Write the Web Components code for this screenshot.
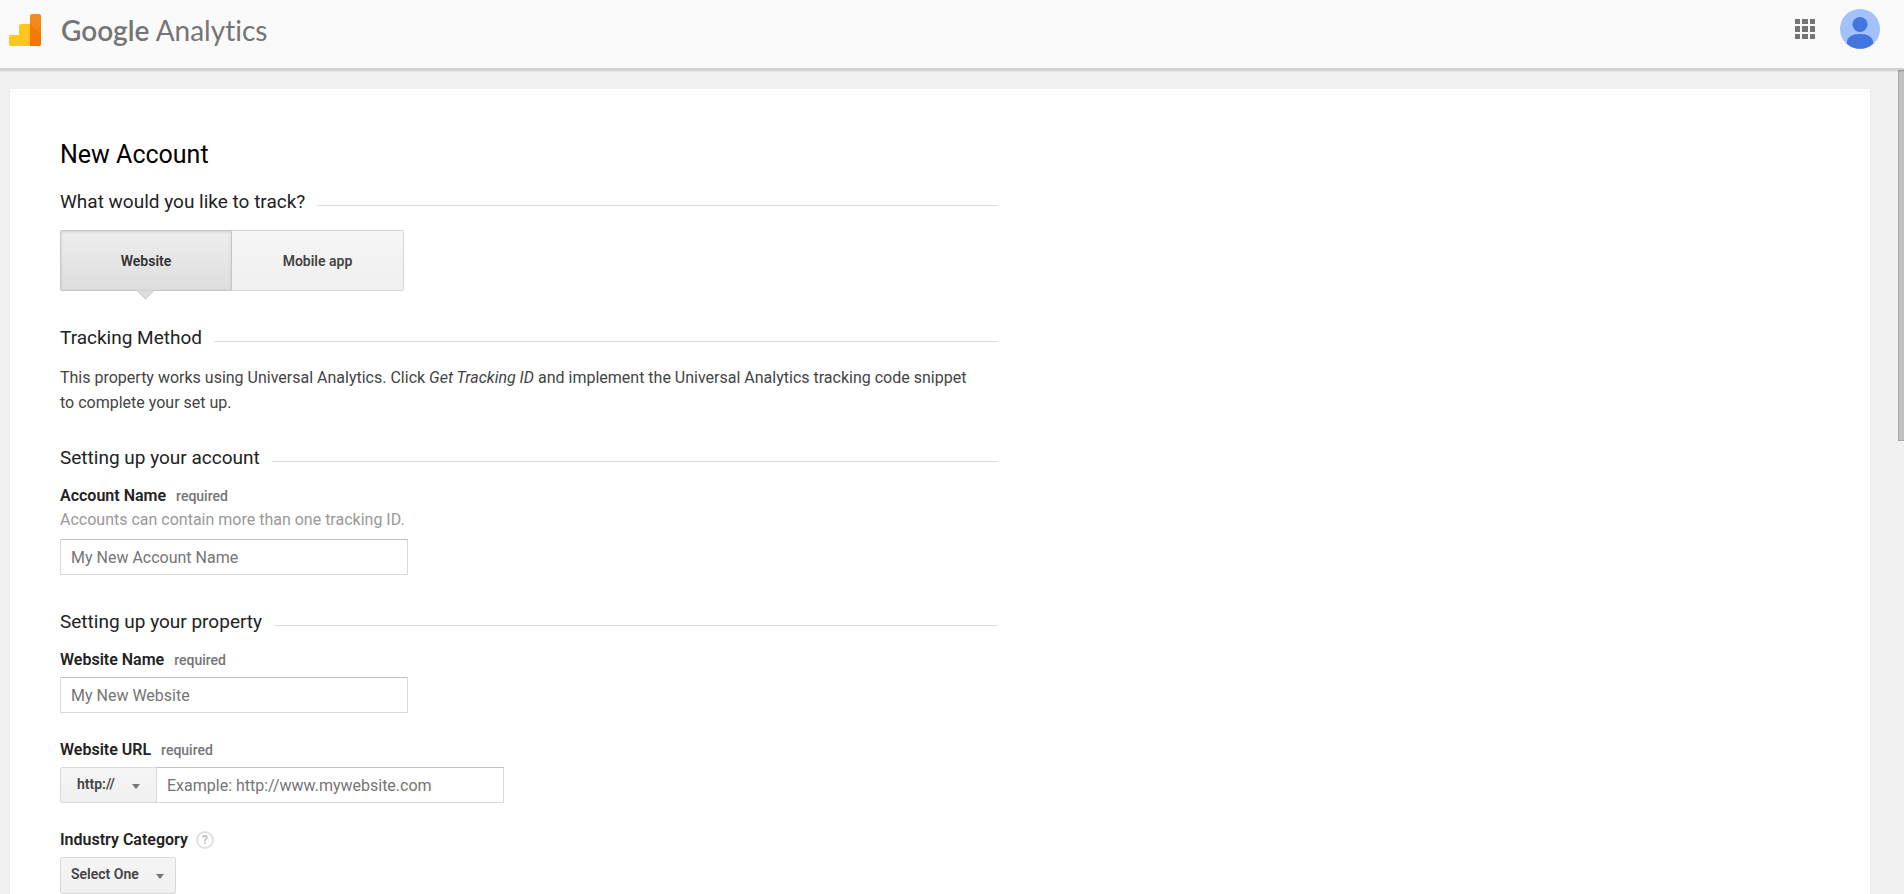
<!DOCTYPE html>
<html lang="en">
<head>
<meta charset="utf-8">
<meta name="viewport" content="width=device-width, initial-scale=1">
<title>Google Analytics</title>
<style>
    html, body {
        height: 100%;
        margin: 0;
    }
    body {
        font-family: Roboto, "Liberation Sans", sans-serif;
        font-size: 16px;
        color: #444;
        background: #f1f1f1;
    }
    h1 {
        margin: 0 0 21px;
        font-size: 25px;
        line-height: 28px;
        font-weight: 400;
        color: #000;
    }
    p {
        max-width: 924px;
        margin: -1px 0 0;
        line-height: 25px;
    }
</style>
</head>
<body>

<ga-shell>
    <ga-header slot="header"></ga-header>
    <ga-card>
        <h1>New Account</h1>
        <ga-section heading="What would you like to track?">
            <ga-toggle options="Website,Mobile app"></ga-toggle>
        </ga-section>
        <ga-section heading="Tracking Method">
            <p>This property works using Universal Analytics. Click <em>Get Tracking ID</em> and implement the Universal Analytics tracking code snippet to complete your set up.</p>
        </ga-section>
        <ga-section heading="Setting up your account">
            <ga-field label="Account Name" required hint="Accounts can contain more than one tracking ID." placeholder="My New Account Name"></ga-field>
        </ga-section>
        <ga-section heading="Setting up your property">
            <ga-field label="Website Name" required placeholder="My New Website"></ga-field>
            <ga-field label="Website URL" required placeholder="Example: http://www.mywebsite.com">
                <ga-select slot="prefix" class="joined" label="Protocol" options="http://,https://"></ga-select>
            </ga-field>
            <ga-select label="Industry Category" show-label options="Select One"></ga-select>
        </ga-section>
    </ga-card>
</ga-shell>

<script>
(function() {

    // Creates the open shadow root of a component
    function render(component, html) {
        component.attachShadow({ mode: 'open' }).innerHTML = html;
        return component.shadowRoot;
    }

    // Label styles shared by the form components
    const labelCSS = `
        .label {
            display: flex;
            align-items: baseline;
            gap: 10px;
            margin-bottom: 7px;
            line-height: 20px;
        }
        label {
            font-weight: 600;
            color: #222;
        }`;


    // ------------------------------------------------------ SHELL

    class GaShell extends HTMLElement {
        constructor() {
            super();
            render(this, `
            <style>
                :host {
                    display: flex;
                    flex-direction: column;
                    height: 100vh;
                    overflow: hidden;
                }
                .view {
                    display: flex;
                    flex: 1;
                    min-height: 0;
                }
                main {
                    flex: 1;
                    min-width: 0;
                    overflow: hidden;
                    padding: 19px 28px 0 10px;
                }
                .scrollbar { width: 6px; }
                .thumb {
                    box-sizing: border-box;
                    height: 45%;
                    background: #c1c1c1;
                    border: 1px solid #a8a8a8;
                    border-width: 1px 0 1px 1px;
                }
            </style>
            <slot name="header"></slot>
            <div class="view">
                <main><slot></slot></main>
                <div class="scrollbar"><div class="thumb"></div></div>
            </div>`);
        }
    }


    // ------------------------------------------------------ HEADER

    class GaHeader extends HTMLElement {
        constructor() {
            super();
            render(this, `
            <style>
                :host {
                    display: block;
                    z-index: 1;
                }
                header {
                    display: flex;
                    align-items: center;
                    box-sizing: border-box;
                    height: 70px;
                    padding: 0 24px 10px 9px;
                    background: #fafafa;
                    border-bottom: 2px solid #d0d0d0;
                    box-shadow: 0 1px 2px rgba(0,0,0,.15);
                }
                svg { display: block; }
                .brand {
                    display: flex;
                    align-items: center;
                    gap: 20px;
                    flex: 1;
                    padding-top: 2px;
                    color: #757575;
                    text-decoration: none;
                    font: 28px/32px Lato, "Open Sans", sans-serif;
                    font-variant-ligatures: none;
                }
                .brand b { font-weight: 600; }
                button {
                    padding: 0;
                    border: 0;
                    background: none;
                }
                .apps { margin-right: 25px; }
            </style>
            <header>
                <a class="brand" href="#">
                    <svg width="32" height="32" viewBox="0 0 32 32" aria-hidden="true">
                        <defs>
                            <linearGradient id="bar" x1="0" y1="0" x2="0" y2="1">
                                <stop offset="0" stop-color="#f68b1f"/>
                                <stop offset="1" stop-color="#f57c00"/>
                            </linearGradient>
                        </defs>
                        <path fill="#ffc61c" d="M2 21h8V12a2 2 0 0 1 2-2h9v22H2a2 2 0 0 1-2-2v-7a2 2 0 0 1 2-2z"/>
                        <path fill="url(#bar)" d="M23 0h7a2 2 0 0 1 2 2v28a2 2 0 0 1-2 2h-9V2a2 2 0 0 1 2-2z"/>
                        <path fill="#ef6c00" opacity=".4" d="M21 10l11 11v9a2 2 0 0 1-2 2h-9z"/>
                    </svg>
                    <span><b>Google</b> Analytics</span>
                </a>
                <button class="apps" aria-label="Apps">
                    <svg width="20" height="20" fill="#757575">
                        <path d="M0 0h5v5H0zM7 0h6v5H7zM15 0h5v5h-5zM0 7h5v6H0zM7 7h6v6H7zM15 7h5v6h-5zM0 15h5v5H0zM7 15h6v5H7zM15 15h5v5h-5z"/>
                    </svg>
                </button>
                <button aria-label="Account">
                    <svg width="40" height="40" viewBox="0 0 40 40">
                        <circle cx="20" cy="20" r="20" fill="#a1c2fa"/>
                        <circle cx="20" cy="15.500" r="7.500" fill="#4374e0"/>
                        <path fill="#4374e0" d="M7 35v-2c0-4.500 5-8 13-8s13 3.500 13 8v2a20 20 0 0 1-26 0z"/>
                    </svg>
                </button>
            </header>`);
        }
    }


    // ------------------------------------------------------ CARD

    class GaCard extends HTMLElement {
        constructor() {
            super();
            render(this, `
            <style>
                :host {
                    display: block;
                    min-height: 100%;
                    padding: 52px 50px 0;
                    background: #fff;
                    box-shadow: 0 1px 1px rgba(0,0,0,.15);
                }
                .column { max-width: 938px; }
            </style>
            <div class="column"><slot></slot></div>`);
        }
    }


    // ------------------------------------------------------ SECTION

    class GaSection extends HTMLElement {
        constructor() {
            super();
            render(this, `
            <style>
                :host {
                    display: block;
                    margin-bottom: 31px;
                }
                .heading {
                    display: flex;
                    align-items: flex-end;
                    gap: 12px;
                    margin-bottom: 16px;
                }
                h2 {
                    margin: 0;
                    font-size: 19px;
                    line-height: 24px;
                    font-weight: 400;
                    color: #222;
                }
                .rule {
                    flex: 1;
                    height: 1px;
                    margin-bottom: 8px;
                    background: #e0e0e0;
                }
                .body {
                    display: flex;
                    flex-direction: column;
                    gap: 27px;
                }
            </style>
            <div class="heading"><h2>${this.getAttribute('heading')}</h2><div class="rule"></div></div>
            <div class="body"><slot></slot></div>`);
        }
    }


    // ------------------------------------------------------ TOGGLE

    class GaToggle extends HTMLElement {
        constructor() {
            super();
            const buttons = this.getAttribute('options').split(',')
                .map((text, i) => `<button aria-pressed="${i === 0}">${text}</button>`).join('');
            const root = render(this, `
            <style>
                :host {
                    display: flex;
                    margin-bottom: 4px;
                }
                button {
                    position: relative;
                    box-sizing: border-box;
                    width: 172px;
                    height: 61px;
                    padding: 0;
                    border: 1px solid #d6d6d6;
                    border-left: 0;
                    border-radius: 0 2px 2px 0;
                    background: linear-gradient(#f5f5f5, #f0f0f0);
                    font: 600 14px/20px Roboto, sans-serif;
                    color: #444;
                }
                button:first-of-type {
                    border-left: 1px solid #c6c6c6;
                    border-radius: 2px 0 0 2px;
                }
                button[aria-pressed="true"] {
                    border-color: #c6c6c6;
                    background: linear-gradient(#eee, #dedede);
                    box-shadow: inset 0 1px 3px rgba(0,0,0,.12);
                    color: #333;
                }
                /* pointer under the active option */
                button[aria-pressed="true"]::after {
                    content: "";
                    position: absolute;
                    left: 50%;
                    bottom: -7px;
                    box-sizing: border-box;
                    width: 13px;
                    height: 13px;
                    margin-left: -7px;
                    border: 1px solid #c6c6c6;
                    border-width: 0 1px 1px 0;
                    background: #dedede;
                    clip-path: polygon(100% 0, 100% 100%, 0 100%);
                    transform: rotate(45deg);
                }
            </style>
            ${buttons}`);
            root.querySelectorAll('button').forEach(button => {
                button.addEventListener('click', () => {
                    root.querySelectorAll('button').forEach(b => b.setAttribute('aria-pressed', b === button));
                });
            });
        }
    }


    // ------------------------------------------------------ TEXT FIELD

    class GaField extends HTMLElement {
        constructor() {
            super();
            const hint = this.getAttribute('hint');
            render(this, `
            <style>
                :host { display: block; }
                :host(:only-child) { margin-bottom: 4px; }
                ${labelCSS}
                .required {
                    font-size: 14px;
                    font-weight: 500;
                    color: #757575;
                }
                .hint {
                    margin: -4px 0 8px;
                    line-height: 22px;
                    color: #999;
                }
                .control { display: flex; }
                input {
                    box-sizing: border-box;
                    width: 348px;
                    height: 36px;
                    padding: 0 10px;
                    border: 1px solid #d9d9d9;
                    border-top-color: #c0c0c0;
                    background: #fff;
                    font: 16px/20px Roboto, sans-serif;
                    color: #222;
                }
                input::placeholder { color: #757575; }
                ::slotted(.joined) { margin-right: -1px; }
            </style>
            <div class="label">
                <label for="input">${this.getAttribute('label')}</label>
                ${this.hasAttribute('required') ? '<span class="required">required</span>' : ''}
            </div>
            ${hint ? `<div class="hint">${hint}</div>` : ''}
            <div class="control">
                <slot name="prefix"></slot>
                <input id="input" type="text" placeholder="${this.getAttribute('placeholder')}">
            </div>`);
        }
    }


    // ------------------------------------------------------ SELECT

    class GaSelect extends HTMLElement {
        constructor() {
            super();
            const label = this.getAttribute('label');
            const showLabel = this.hasAttribute('show-label');
            const options = this.getAttribute('options').split(',').map(text => `<option>${text}</option>`).join('');
            render(this, `
            <style>
                :host { display: block; }
                ${labelCSS}
                .label {
                    align-items: center;
                    gap: 8px;
                }
                .help {
                    box-sizing: border-box;
                    width: 18px;
                    height: 18px;
                    padding: 0;
                    border: 2px solid #e0e0e0;
                    border-radius: 50%;
                    background: #fff;
                    font: 700 12px/14px Roboto, sans-serif;
                    color: #c0c0c0;
                }
                .control {
                    display: inline-grid;
                    align-items: center;
                    vertical-align: top;
                }
                select, .arrow { grid-area: 1 / 1; }
                select {
                    appearance: none;
                    box-sizing: border-box;
                    width: 116px;
                    height: 37px;
                    padding: 0 10px 3px;
                    border: 1px solid #d9d9d9;
                    border-radius: 2px;
                    background: linear-gradient(#f5f5f5, #f0f0f0);
                    font: 600 14px/20px Roboto, sans-serif;
                    color: #444;
                }
                .arrow {
                    justify-self: end;
                    margin: 2px 12px 0 0;
                    pointer-events: none;
                }
                :host(.joined) select {
                    width: 97px;
                    height: 36px;
                    padding: 0 16px 3px;
                }
                :host(.joined) .arrow { margin-right: 17px; }
            </style>
            ${showLabel ? `<div class="label"><label for="select">${label}</label><button class="help" aria-label="Help">?</button></div>` : ''}
            <div class="control">
                <select id="select" ${showLabel ? '' : `aria-label="${label}"`}>${options}</select>
                <svg class="arrow" width="8" height="5" fill="#757575" aria-hidden="true"><path d="M0 0h8L4 5z"/></svg>
            </div>`);
        }
    }

    customElements.define('ga-shell', GaShell);
    customElements.define('ga-header', GaHeader);
    customElements.define('ga-card', GaCard);
    customElements.define('ga-section', GaSection);
    customElements.define('ga-toggle', GaToggle);
    customElements.define('ga-field', GaField);
    customElements.define('ga-select', GaSelect);

})();
</script>
</body>
</html>
